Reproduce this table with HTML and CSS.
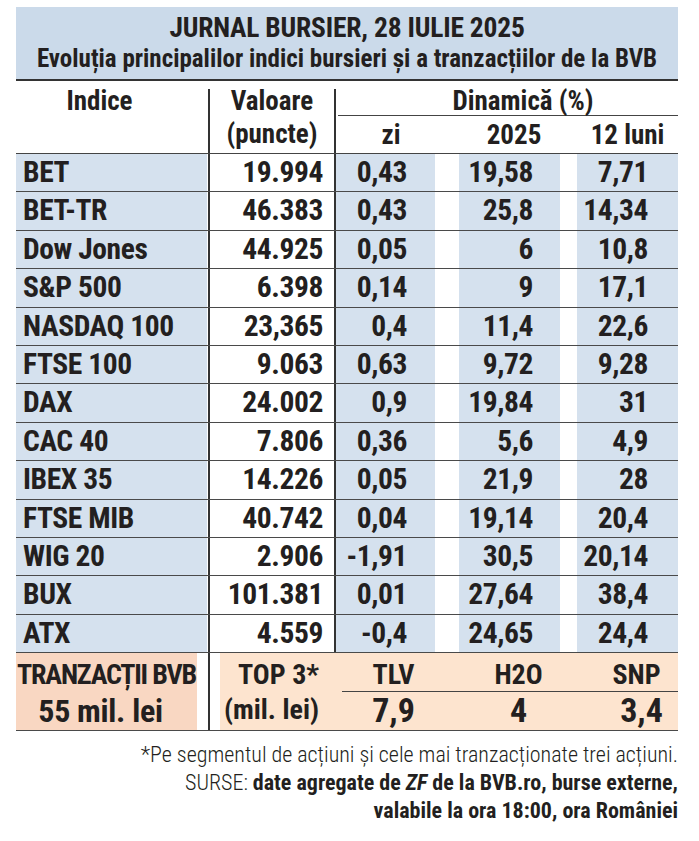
FILE: index.html
```html
<!DOCTYPE html>
<html lang="ro">
<head>
<meta charset="utf-8">
<title>Jurnal bursier</title>
<link rel="stylesheet" href="styles.css">
</head>
<body>
<div class="sheet">
  <header class="title">
    <div class="t1">JURNAL BURSIER, 28 IULIE 2025</div>
    <div class="t2">Evoluția principalilor indici bursieri și a tranzacțiilor de la BVB</div>
  </header>

  <div class="thead">
    <div class="h-indice">Indice</div>
    <div class="h-valoare"><div class="hv1">Valoare</div><div class="hv2">(puncte)</div></div>
    <div class="h-vline"></div>
    <div class="h-din">Dinamică (%)</div>
    <div class="h-zi">zi</div>
    <div class="h-ytd">2025</div>
    <div class="h-12">12 luni</div>
  </div>

  <div class="row"><div class="c-name">BET</div><div class="c-val">19.994</div><div class="c-zi">0,43</div><div class="c-ytd">19,58</div><div class="c-12">7,71</div></div>
  <div class="row"><div class="c-name">BET-TR</div><div class="c-val">46.383</div><div class="c-zi">0,43</div><div class="c-ytd">25,8</div><div class="c-12">14,34</div></div>
  <div class="row"><div class="c-name">Dow Jones</div><div class="c-val">44.925</div><div class="c-zi">0,05</div><div class="c-ytd">6</div><div class="c-12">10,8</div></div>
  <div class="row"><div class="c-name">S&amp;P 500</div><div class="c-val">6.398</div><div class="c-zi">0,14</div><div class="c-ytd">9</div><div class="c-12">17,1</div></div>
  <div class="row"><div class="c-name">NASDAQ 100</div><div class="c-val">23,365</div><div class="c-zi">0,4</div><div class="c-ytd">11,4</div><div class="c-12">22,6</div></div>
  <div class="row"><div class="c-name">FTSE 100</div><div class="c-val">9.063</div><div class="c-zi">0,63</div><div class="c-ytd">9,72</div><div class="c-12">9,28</div></div>
  <div class="row"><div class="c-name">DAX</div><div class="c-val">24.002</div><div class="c-zi">0,9</div><div class="c-ytd">19,84</div><div class="c-12">31</div></div>
  <div class="row"><div class="c-name">CAC 40</div><div class="c-val">7.806</div><div class="c-zi">0,36</div><div class="c-ytd">5,6</div><div class="c-12">4,9</div></div>
  <div class="row"><div class="c-name">IBEX 35</div><div class="c-val">14.226</div><div class="c-zi">0,05</div><div class="c-ytd">21,9</div><div class="c-12">28</div></div>
  <div class="row"><div class="c-name">FTSE MIB</div><div class="c-val">40.742</div><div class="c-zi">0,04</div><div class="c-ytd">19,14</div><div class="c-12">20,4</div></div>
  <div class="row"><div class="c-name">WIG 20</div><div class="c-val">2.906</div><div class="c-zi">-1,91</div><div class="c-ytd">30,5</div><div class="c-12">20,14</div></div>
  <div class="row"><div class="c-name">BUX</div><div class="c-val">101.381</div><div class="c-zi">0,01</div><div class="c-ytd">27,64</div><div class="c-12">38,4</div></div>
  <div class="row"><div class="c-name">ATX</div><div class="c-val">4.559</div><div class="c-zi">-0,4</div><div class="c-ytd">24,65</div><div class="c-12">24,4</div></div>

  <div class="bottom">
    <div class="b-left"><div class="b-l1">TRANZACȚII BVB</div><div class="b-l2">55 mil. lei</div></div>
    <div class="b-vline"></div>
    <div class="b-peach"></div>
    <div class="b-sub"></div>
    <div class="b-top3">TOP 3*</div>
    <div class="b-unit">(mil. lei)</div>
    <div class="b-sym b-c3">TLV</div>
    <div class="b-sym b-c5">H2O</div>
    <div class="b-sym b-c7">SNP</div>
    <div class="b-num b-c3">7,9</div>
    <div class="b-num b-c5">4</div>
    <div class="b-num b-c7 b-last">3,4</div>
  </div>

  <footer class="notes">
    <div class="n1">*Pe segmentul de acțiuni și cele mai tranzacționate trei acțiuni.</div>
    <div class="n2">SURSE: <b>date agregate de <i>ZF</i> de la BVB.ro, burse externe,</b></div>
    <div class="n3"><b>valabile la ora 18:00, ora României</b></div>
  </footer>
</div>
</body>
</html>
```

FILE: styles.css
```css
html, body {
  margin: 0;
  padding: 0;
  background: #ffffff;
}
body {
  color: #231f20;
  font-family: "Roboto Condensed", "Open Sans Condensed", "Open Sans", "DejaVu Sans Condensed", sans-serif;
  font-stretch: 75%;
}
.sheet {
  width: 662px;
  margin-left: 16px;
  padding-top: 7px;
  white-space: nowrap;
}

/* title */
.title {
  background: #cbdaea;
  border-bottom: 2px solid #333333;
  text-align: center;
  font-weight: bold;
  padding: 6px 0;
}
.t1 { font-size: 27.5px; line-height: 30px; letter-spacing: -0.2px; }
.t2 { font-size: 25px; line-height: 30px; padding-top: 1px; margin-bottom: -1px; }

/* shared grid */
.thead, .row, .bottom {
  display: grid;
  grid-template-columns: 192px 126px 101px 24px 101px 17px 101px;
}

/* header */
.thead {
  margin-top: 8px;
  grid-template-rows: 26.5px 37.5px;
  border-bottom: 1.5px solid #444444;
  font-weight: bold;
  font-size: 27px;
}
.h-indice {
  grid-column: 1; grid-row: 1 / 3;
  line-height: 25px;
  text-align: center;
  padding-right: 25px;
}
.h-valoare {
  grid-column: 2; grid-row: 1 / 3;
  border-left: 2px solid #333333;
  text-align: center;
}
.hv1 { line-height: 25px; }
.hv2 { line-height: 38px; margin-top: 1px; }
.h-vline {
  grid-column: 3; grid-row: 1 / 3;
  border-left: 2px solid #333333;
}
.h-din {
  grid-column: 3 / 8; grid-row: 1;
  margin-left: 4px;
  border-bottom: 1.5px solid #444444;
  line-height: 25px;
  text-align: center;
  padding-left: 30px;
}
.h-zi, .h-ytd, .h-12 { grid-row: 2; line-height: 38px; text-align: center; }
.h-zi { grid-column: 3; padding-left: 13px; }
.h-ytd { grid-column: 5; padding-left: 9px; }
.h-12 { grid-column: 7; }

/* body rows */
.row {
  height: 38.4px;
  box-sizing: border-box;
  border-bottom: 1.5px solid #4a4a4a;
  font-weight: bold;
  font-size: 29.5px;
  letter-spacing: -0.4px;
  line-height: 36px;
}
.c-name {
  grid-column: 1;
  background: #d5e1ee;
  padding-left: 7px;
  margin-right: 1px;
}
.c-val {
  grid-column: 2;
  border-left: 2px solid #333333;
  text-align: right;
  padding-right: 11px;
}
.c-zi {
  grid-column: 3;
  border-left: 2px solid #333333;
  background: #d5e1ee;
  text-align: right;
  padding-right: 28px;
}
.c-ytd {
  grid-column: 5;
  background: #d5e1ee;
  text-align: right;
  padding-right: 27px;
}
.c-12 {
  grid-column: 7;
  background: #d5e1ee;
  text-align: right;
  padding-right: 30px;
}

/* bottom block */
.bottom {
  grid-template-rows: 39px 38px;
  border-bottom: 1.5px solid #4a4a4a;
  font-weight: bold;
}
.b-left {
  grid-column: 1; grid-row: 1 / 3;
  margin-right: 11px;
  background: #f9d7c2;
  text-align: center;
}
.b-l1 {
  font-size: 28px;
  letter-spacing: -1.2px;
  line-height: 39px;
  padding-top: 2px;
  margin-bottom: -2px;
}
.b-l2 {
  font-size: 32px;
  line-height: 38px;
  padding-right: 12px;
  letter-spacing: -0.3px;
}
.b-vline {
  grid-column: 2; grid-row: 1 / 3;
  border-left: 2px solid #333333;
}
.b-peach {
  grid-column: 2 / 8; grid-row: 1 / 3;
  margin-left: 12px;
  background: #fde4cf;
}
.b-sub {
  grid-column: 3 / 8; grid-row: 1;
  margin-left: 8px;
  border-bottom: 1.5px solid #444444;
}
.b-top3, .b-unit {
  grid-column: 2;
  text-align: right;
  padding-right: 15px;
  font-size: 28px;
}
.b-top3 { grid-row: 1; line-height: 39px; padding-top: 2px; }
.b-unit { grid-row: 2; line-height: 36px; }
.b-sym {
  grid-row: 1;
  font-size: 28px;
  line-height: 39px;
  padding-top: 2px;
  text-align: center;
  padding-left: 18px;
}
.b-num {
  grid-row: 2;
  font-size: 34px;
  line-height: 36px;
  text-align: center;
  padding-left: 18px;
}
.b-last { padding-left: 28px; }
.b-c3 { grid-column: 3; }
.b-c5 { grid-column: 5; }
.b-c7 { grid-column: 7; }

/* notes */
.notes {
  margin-top: 10px;
  text-align: right;
  font-size: 22px;
  line-height: 28px;
  font-weight: 300;
}
.notes b { font-weight: bold; }
```
